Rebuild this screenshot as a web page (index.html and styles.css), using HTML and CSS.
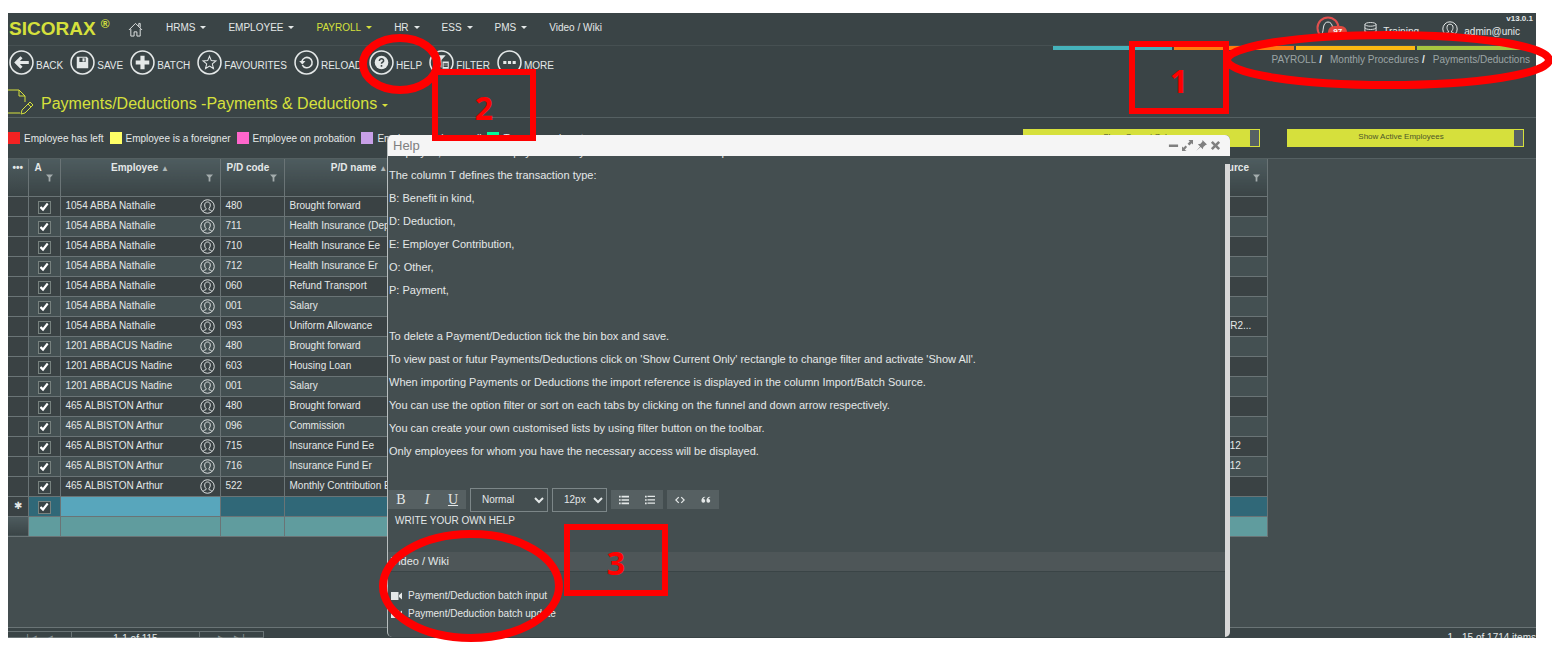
FILE: index.html
```
<!DOCTYPE html>
<html lang="en">
<head>
    <meta charset="UTF-8">
    <meta name="viewport" content="width=device-width, initial-scale=1.0">
    <title>Sicorax - Payments/Deductions</title>
    <link rel="stylesheet" href="styles.css">
</head>
<body>
    <svg class="symbols" aria-hidden="true">
        <symbol id="user" viewBox="0 0 16 16">
            <circle cx="8" cy="8" r="7.2"/>
            <path d="M3.2 13.2c.6-1.3 2.2-1.2 3.2-1.9V10C5.400 9.200 5 7.800 5 6.300c0-1.900 1.200-3.100 3-3.100s3 1.200 3 3.100c0 1.500-.4 2.900-1.400 3.700v1.300c1 .7 2.600.6 3.200 1.900"/>
        </symbol>
        <symbol id="funnel" viewBox="0 0 8 8"><path d="M0 0h8L5 3.500V8H3V3.500z"/></symbol>
        <symbol id="camera" viewBox="0 0 12 8"><path d="M0 0h7.500v8H0zM8 3l3-2.500v7L8 5z"/></symbol>
    </svg>

    <div class="app">
        <header class="topbar">
            <a class="logo" href="#">SICORAX <sup>®</sup></a>
            <a class="home" href="#" aria-label="Home">
                <svg viewBox="0 0 16 16"><path d="M1 8.500 8 1.500l7 7M3 7.500V15h3.500v-4.500h3V15H13V7.500M11.500 4.500v-3H13V6"/></svg>
            </a>
            <nav class="menu">
                <a href="#" class="caret">HRMS</a>
                <a href="#" class="caret">EMPLOYEE</a>
                <a href="#" class="caret active">PAYROLL</a>
                <a href="#" class="caret">HR</a>
                <a href="#" class="caret">ESS</a>
                <a href="#" class="caret">PMS</a>
                <a href="#">Video / Wiki</a>
            </nav>
            <div class="account">
                <span class="bell">
                    <svg viewBox="0 0 24 24"><circle cx="12" cy="12" r="10.500"/><path d="M6 18c1-2 1-4 1.500-7S9.500 6 12 6s4 2 4.500 5 .5 5 1.500 7z"/></svg>
                    <span class="badge">97</span>
                </span>
                <span class="database">
                    <svg viewBox="0 0 14 16"><ellipse cx="7" cy="3" rx="6" ry="2"/><path d="M1 3v10c0 2.700 12 2.700 12 0V3M1 6.500c0 2.700 12 2.700 12 0M1 10c0 2.700 12 2.700 12 0"/></svg>
                    Training
                </span>
                <span class="login"><svg><use href="#user"/></svg>admin@unic</span>
            </div>
            <span class="version">v13.0.1</span>
        </header>

        <div class="toolbar">
            <div class="actions">
                <button><svg viewBox="0 0 24 24"><circle cx="12" cy="12" r="11"/><path class="fill" d="M5 12l6-6 2 2-2.500 2.500H19v3h-8.500L13 16l-2 2z"/></svg><span>BACK</span></button>
                <button><svg viewBox="0 0 24 24"><circle cx="12" cy="12" r="11"/><path class="fill" fill-rule="evenodd" d="M6.500 6.500h9.500L17.500 8v9.500h-11zM9 7.500v4h6v-4zM12 8h2v3h-2z"/></svg><span>SAVE</span></button>
                <button><svg viewBox="0 0 24 24"><circle cx="12" cy="12" r="11"/><path class="fill" d="M10 5.500h4V10h4.500v4H14v4.500h-4V14H5.500v-4H10z"/></svg><span>BATCH</span></button>
                <button><svg viewBox="0 0 24 24"><circle cx="12" cy="12" r="11"/><path class="thin" d="M12 6l1.700 4.200 4.500.300-3.500 2.900 1.100 4.400L12 15.400l-3.800 2.400 1.100-4.400-3.500-2.900 4.500-.3z"/></svg><span>FAVOURITES</span></button>
                <button><svg viewBox="0 0 24 24"><circle cx="12" cy="12" r="11"/><path d="M8 14.500A5 5 0 1 0 7.500 11"/><path class="fill" d="M5 10.500h6L8 14z"/></svg><span>RELOAD</span></button>
                <button><svg viewBox="0 0 24 24"><circle cx="12" cy="12" r="11"/><circle class="fill" cx="12" cy="12" r="6.500"/><path class="mark" d="M10 10.500c0-3 4.200-2.700 4 0-.1 1.200-2 1.300-2 2.800M12 14.500v1.500"/></svg><span>HELP</span></button>
                <button><svg viewBox="0 0 24 24"><circle cx="12" cy="12" r="11"/><path class="fill" d="M5 5h11l-4 4.500V17l-3-2V9.500zM13 11h6v7h-6z"/><path class="mark" d="M14 13.500h4M14 15.500h4"/></svg><span>FILTER</span></button>
                <button><svg viewBox="0 0 24 24"><circle cx="12" cy="12" r="11"/><path class="fill" d="M6 10.500h3v3H6zM10.500 10.500h3v3h-3zM15 10.500h3v3h-3z"/></svg><span>MORE</span></button>
            </div>
            <div class="trail">
                <div class="stripes"><i class="cyan"></i><i class="orange"></i><i class="yellow"></i><i class="green"></i></div>
                <div class="breadcrumb">
                    <a href="#">PAYROLL</a><b>/</b><a href="#">Monthly Procedures</a><b>/</b><a href="#">Payments/Deductions</a>
                </div>
            </div>
        </div>

        <div class="page-title">
            <svg viewBox="0 0 26 28"><path d="M0 2h11l6 6v6M11 2v6h6M0 25h12M13 26l1-4 8-8 3 3-8 8zM20 16l3 3"/></svg>
            <h1 class="caret">Payments/Deductions -Payments &amp; Deductions</h1>
        </div>

        <div class="filters">
            <div class="legend">
                <span><i class="left"></i>Employee has left</span>
                <span><i class="foreigner"></i>Employee is a foreigner</span>
                <span><i class="probation"></i>Employee on probation</span>
                <span><i class="payroll"></i>Employee not in payroll</span>
                <span><i class="terminated"></i>Temporary absent</span>
            </div>
            <div class="toggles">
                <button class="toggle">Show Current Only</button>
                <button class="toggle">Show Active Employees</button>
            </div>
        </div>

        <main class="grid-area">
            <table class="grid">
                <colgroup><col class="c-row"><col class="c-check"><col class="c-employee"><col class="c-code"><col class="c-name"><col><col class="c-source"></colgroup>
                <thead>
                    <tr>
                        <th>•••</th>
                        <th class="first">A<svg><use href="#funnel"/></svg></th>
                        <th>Employee <small>▲</small><svg><use href="#funnel"/></svg></th>
                        <th class="first">P/D code<svg><use href="#funnel"/></svg></th>
                        <th>P/D name <small>▲</small><svg><use href="#funnel"/></svg></th>
                        <th></th>
                        <th class="source">Import/Batch Source<svg><use href="#funnel"/></svg></th>
                    </tr>
                </thead>
                <tbody id="rows"></tbody>
            </table>
        </main>

        <footer class="pager">
            <div class="pages"><span>|◀&nbsp;&nbsp; ◀</span><span>1-1 of 115</span><span>▶&nbsp;&nbsp; ▶|</span></div>
            <div class="total">1 - 15 of 1714 items</div>
        </footer>

        <section class="help">
            <div class="help-title">
                <h2>Help</h2>
                <button aria-label="Minimise"><svg viewBox="0 0 12 12"><path d="M1 5h10v2.500H1z"/></svg></button>
                <button aria-label="Maximise"><svg viewBox="0 0 12 12"><path d="M7 0h5v5l-1.500-1.500L8 6 6 4l2.500-2.500zM0 12V7l1.500 1.500L4 6l1.500 1.500L3 10.500 5 12z"/></svg></button>
                <button aria-label="Pin"><svg viewBox="0 0 12 12"><path d="M7 0l5 5-1.500.500L8 7.500 7.500 10 5 7.500 0 12l4.500-5L2 4.500 5 4l2-2.500z"/></svg></button>
                <button aria-label="Close"><svg viewBox="0 0 12 12"><path d="M3 1l3 3 3-3 2 2-3 3 3 3-2 2-3-3-3 3-2-2 3-3-3-3z"/></svg></button>
            </div>
            <div class="help-body">
                <div class="help-text">
                    <p>Employee, deductions or payments may be entered for one or more periods.</p>
                    <p>The column T defines the transaction type:</p>
                    <p>B: Benefit in kind,</p>
                    <p>D: Deduction,</p>
                    <p>E: Employer Contribution,</p>
                    <p>O: Other,</p>
                    <p>P: Payment,</p>
                    <p>&nbsp;</p>
                    <p>To delete a Payment/Deduction tick the bin box and save.</p>
                    <p>To view past or futur Payments/Deductions click on 'Show Current Only' rectangle to change filter and activate 'Show All'.</p>
                    <p>When importing Payments or Deductions the import reference is displayed in the column Import/Batch Source.</p>
                    <p>You can use the option filter or sort on each tabs by clicking on the funnel and down arrow respectively.</p>
                    <p>You can create your own customised lists by using filter button on the toolbar.</p>
                    <p>Only employees for whom you have the necessary access will be displayed.</p>
                </div>
                <div class="editor-bar">
                    <div class="group serif"><button>B</button><button><em>I</em></button><button><u>U</u></button></div>
                    <select class="style" aria-label="Style"><option>Normal</option></select>
                    <select class="size" aria-label="Size"><option>12px</option></select>
                    <div class="group">
                        <button aria-label="Numbered list"><svg viewBox="0 0 12 12"><path d="M0 1h2v2H0zM0 5h2v2H0zM0 9h2v2H0zM3 1h9v2H3zM3 5h9v2H3zM3 9h9v2H3z"/></svg></button>
                        <button aria-label="Bullet list"><svg viewBox="0 0 12 12"><path d="M0 1h2v2H0zM0 5h2v2H0zM0 9h2v2H0zM3 1h9v1.500H3zM3 5h9v1.500H3zM3 9h9v1.500H3z"/></svg></button>
                    </div>
                    <div class="group">
                        <button aria-label="Code"><svg viewBox="0 0 12 12"><path class="line" d="M4.500 2.500 1 6l3.500 3.500M7.500 2.500 11 6 7.500 9.500"/></svg></button>
                        <button aria-label="Quote"><svg viewBox="0 0 12 12"><path d="M5 2C2 2 .5 4 .5 7a2.300 2.300 0 1 0 2.500-2.300C3 3.500 4 3 5 3zM11 2C8 2 6.500 4 6.500 7A2.300 2.300 0 1 0 9 4.700C9 3.500 10 3 11 3z"/></svg></button>
                    </div>
                </div>
                <div class="own-help">WRITE YOUR OWN HELP</div>
                <h3>Video / Wiki</h3>
                <ul class="videos">
                    <li><a href="#"><svg><use href="#camera"/></svg>Payment/Deduction batch input</a></li>
                    <li><a href="#"><svg><use href="#camera"/></svg>Payment/Deduction batch update</a></li>
                </ul>
            </div>
            <div class="scrollbar"></div>
        </section>
    </div>

    <!-- Numbered steps drawn over the screen -->
    <svg class="steps" width="1552" height="650">
        <ellipse cx="400" cy="64" rx="37" ry="26"/>
        <rect x="435" y="72" width="98" height="66"/>
        <rect x="1132" y="44" width="94" height="67"/>
        <ellipse cx="1388" cy="60" rx="161" ry="25"/>
        <ellipse cx="471" cy="586" rx="88" ry="52"/>
        <rect x="567" y="527" width="98" height="66"/>
        <text x="1179" y="93">1</text>
        <text x="484" y="120">2</text>
        <text x="616" y="575">3</text>
    </svg>

    <script>
        const rows = [
            ['1054 ABBA Nathalie', '480', 'Brought forward', ''],
            ['1054 ABBA Nathalie', '711', 'Health Insurance (Dependents)', ''],
            ['1054 ABBA Nathalie', '710', 'Health Insurance Ee', ''],
            ['1054 ABBA Nathalie', '712', 'Health Insurance Er', ''],
            ['1054 ABBA Nathalie', '060', 'Refund Transport', ''],
            ['1054 ABBA Nathalie', '001', 'Salary', ''],
            ['1054 ABBA Nathalie', '093', 'Uniform Allowance', 'UNIF ALLOW FOR2...'],
            ['1201 ABBACUS Nadine', '480', 'Brought forward', ''],
            ['1201 ABBACUS Nadine', '603', 'Housing Loan', ''],
            ['1201 ABBACUS Nadine', '001', 'Salary', ''],
            ['465 ALBISTON Arthur', '480', 'Brought forward', ''],
            ['465 ALBISTON Arthur', '096', 'Commission', ''],
            ['465 ALBISTON Arthur', '715', 'Insurance Fund Ee', 'IMPORT 20211 412'],
            ['465 ALBISTON Arthur', '716', 'Insurance Fund Er', 'IMPORT 20211 412'],
            ['465 ALBISTON Arthur', '522', 'Monthly Contribution Ee', '']
        ];
        const check = '<input type="checkbox" checked aria-label="Active">';

        let html = '';
        rows.forEach(([employee, code, name, source]) => {
            html += `<tr>
                <td></td><td class="check">${check}</td>
                <td><div class="employee">${employee}<svg><use href="#user"/></svg></div></td>
                <td>${code}</td><td>${name}</td><td></td><td>${source}</td>
            </tr>`;
        });
        html += `<tr class="new-row"><td>✱</td><td class="check">${check}</td><td class="editing"></td><td></td><td></td><td></td><td></td></tr>`;
        html += '<tr class="sum-row"><td></td><td></td><td></td><td></td><td></td><td></td><td></td></tr>';
        document.getElementById('rows').innerHTML = html;
    </script>
</body>
</html>
```
FILE: styles.css
```
* {
    box-sizing: border-box;
}
body {
    margin: 0;
    padding: 13px 16px 12px 8px;
    background-color: #fff;
    font-family: "Liberation Sans", Arial, sans-serif;
    font-size: 10px;
    color: #e4e8e8;
    overflow: hidden;
}
a {
    color: inherit;
    text-decoration: none;
}
button {
    border: 0;
    padding: 0;
    background: none;
    color: inherit;
    font: inherit;
    cursor: pointer;
}
h1, h2, h3, p, ul {
    margin: 0;
    padding: 0;
    font-weight: normal;
}
svg {
    fill: none;
    stroke: currentColor;
    flex: none;
}
.symbols {
    position: absolute;
    width: 0;
    height: 0;
}
.app {
    position: relative;
    display: flex;
    flex-direction: column;
    height: calc(100vh - 25px);
    background-color: #3a4446;
    overflow: hidden;
}

/* Top bar */
.topbar {
    position: relative;
    display: flex;
    align-items: center;
    height: 33px;
    flex: none;
    border-bottom: 1px solid #465052;
}
.logo {
    width: 120px;
    padding-left: 1px;
    font-size: 19px;
    font-weight: bold;
    color: #d6e03c;
}
.logo sup {
    font-size: 12px;
    line-height: 1px;
}
.home svg {
    display: block;
    width: 15px;
    height: 15px;
}
.menu {
    display: flex;
    gap: 22px;
    padding: 0 0 4px 23px;
}
.menu .active {
    color: #d6e03c;
}
.caret::after {
    content: "";
    display: inline-block;
    margin-left: 5px;
    vertical-align: 2px;
    border: 3px solid transparent;
    border-top-color: currentColor;
    border-bottom: 0;
}
.account {
    display: flex;
    align-items: center;
    margin-left: auto;
    padding-right: 16px;
}
.bell {
    position: relative;
    width: 48px;
    height: 26px;
}
.bell svg {
    width: 24px;
    height: 24px;
}
.bell circle {
    stroke: #e0504e;
    stroke-width: 2;
}
.badge {
    position: absolute;
    left: 12px;
    top: 10px;
    width: 19px;
    height: 13px;
    border-radius: 6px;
    background-color: #e0483e;
    color: #fff;
    font-size: 8px;
    font-weight: bold;
    line-height: 12px;
    text-align: center;
}
.database, .login {
    display: flex;
    align-items: flex-end;
    gap: 6px;
}
.database {
    width: 78px;
}
.database svg {
    width: 13px;
    height: 16px;
}
.login svg {
    width: 16px;
    height: 16px;
}
.version {
    position: absolute;
    right: 3px;
    top: 1px;
    font-size: 8px;
    font-weight: bold;
}

/* Toolbar */
.toolbar {
    display: flex;
    justify-content: space-between;
    height: 41px;
    flex: none;
}
.actions {
    display: flex;
    align-items: flex-start;
    gap: 7px;
    padding: 4px 0 0 1px;
}
.actions button {
    display: flex;
    align-items: center;
    gap: 2px;
}
.actions svg {
    width: 25px;
    height: 25px;
    stroke-width: 1.5;
}
.actions span {
    padding-top: 5px;
}
.fill {
    fill: currentColor;
    stroke: none;
}
.thin {
    stroke-width: 1;
}
.mark {
    stroke: #3a4446;
}
.trail {
    width: 483px;
}
.stripes {
    display: flex;
    gap: 2px;
    height: 4px;
}
.stripes i {
    flex: 1;
}
.cyan {
    background-color: #45b2bb;
}
.orange {
    background-color: #ff7a0e;
}
.yellow {
    background-color: #fbb813;
}
.green {
    background-color: #a6c640;
}
.breadcrumb {
    display: flex;
    justify-content: flex-end;
    padding: 4px 6px 0 0;
    color: #9ca4a5;
    line-height: 12px;
}
.breadcrumb b {
    margin: 0 8px 0 3px;
    color: #e4e8e8;
}

/* Page title */
.page-title {
    display: flex;
    align-items: center;
    gap: 7px;
    height: 31px;
    flex: none;
    border-bottom: 1px solid #556062;
    color: #d6e03c;
}
.page-title svg {
    width: 26px;
    height: 28px;
}
.page-title h1 {
    padding-top: 3px;
    font-size: 16px;
}

/* Legend and toggles */
.filters {
    display: flex;
    justify-content: space-between;
    align-items: center;
    height: 40px;
    flex: none;
    padding-right: 12px;
}
.legend {
    display: flex;
    gap: 6px;
}
.legend span {
    display: flex;
    align-items: center;
    gap: 4px;
}
.legend i {
    width: 12px;
    height: 12px;
}
.left {
    background-color: #f42222;
}
.foreigner {
    background-color: #ffff66;
}
.probation {
    background-color: #ff66cc;
}
.payroll {
    background-color: #c8a0e8;
}
.terminated {
    background-color: #00fa9a;
}
.toggles {
    display: flex;
    gap: 27px;
}
.toggle {
    width: 237px;
    height: 18px;
    padding: 0 9px 4px 0;
    border: 1px solid #d6e03c;
    background: linear-gradient(to left, #566064 9px, #d6e03c 9px);
    color: #4c562a;
    font-size: 8px;
}

/* Grid */
.grid-area {
    flex: 1;
    min-height: 0;
    border-top: 1px solid #556062;
    border-bottom: 1px solid #6a7476;
    background-color: #444e50;
    overflow: hidden;
}
.grid {
    width: 1260px;
    table-layout: fixed;
    border-collapse: collapse;
}
.c-row {
    width: 20px;
}
.c-check {
    width: 32px;
}
.c-employee {
    width: 160px;
}
.c-code {
    width: 64px;
}
.c-name {
    width: 150px;
}
.c-source {
    width: 120px;
}
.grid th {
    position: relative;
    height: 37px;
    padding: 3px 0 0;
    border-right: 1px solid #6a7476;
    background: linear-gradient(#4e5c5f, #3a4446);
    line-height: 12px;
    vertical-align: top;
    white-space: nowrap;
}
.grid th.first {
    padding-left: 6px;
    text-align: left;
}
.grid th.source {
    padding-right: 18px;
    text-align: right;
}
.grid th small {
    font-size: 8px;
    color: #b0b8b9;
}
.grid th svg {
    position: absolute;
    right: 7px;
    top: 15px;
    width: 7px;
    height: 8px;
    fill: #a4acad;
    stroke: none;
}
.grid td {
    height: 20px;
    padding: 0 5px;
    border: 1px solid #6a7476;
    border-left: 0;
    line-height: 12px;
    white-space: nowrap;
    overflow: hidden;
}
.grid tbody tr {
    background-color: #3a4244;
}
.grid tbody tr:nth-child(even) {
    background-color: #445052;
}
.grid tbody td:first-child {
    padding: 0;
    background-color: #3a4244;
    text-align: center;
}
.grid .check {
    padding: 2px 0 0;
    text-align: center;
}
.check input {
    appearance: none;
    display: block;
    width: 13px;
    height: 13px;
    margin: 0 auto;
    border: 1px solid #78827f;
    background-color: #3a4446;
}
.check input:checked::before {
    content: "";
    display: block;
    width: 9px;
    height: 9px;
    margin: 1px;
    background-color: #fff;
    clip-path: polygon(0 58%, 20% 42%, 38% 58%, 82% 4%, 100% 20%, 40% 96%);
}
.employee {
    display: flex;
    align-items: center;
    justify-content: space-between;
}
.employee svg {
    width: 15px;
    height: 15px;
}
.grid tbody tr.new-row {
    background-color: #306878;
}
.new-row .editing {
    background-color: #58a6bc;
}
.grid tbody tr.sum-row {
    background-color: #609c9e;
}
.grid .sum-row td:first-child {
    background: linear-gradient(#4e5c5f, #3a4446);
}

/* Pager */
.pager {
    display: flex;
    justify-content: space-between;
    height: 10px;
    flex: none;
    padding-top: 3px;
}
.pages {
    display: flex;
    width: 256px;
    border: 1px solid #6a7476;
    border-left: 0;
    text-align: center;
    line-height: 14px;
}
.pages span {
    flex: 1;
    color: #8a9495;
}
.pages span:nth-child(2) {
    flex: 2;
    border: solid #6a7476;
    border-width: 0 1px;
    color: #e4e8e8;
}
.total {
    line-height: 13px;
}

/* Help window */
.help {
    position: absolute;
    left: 379px;
    right: 306px;
    top: 122px;
    bottom: 1px;
    border-left: 1px solid #b8bebf;
    border-radius: 5px;
    background-color: #444e50;
    overflow: hidden;
}
.help-title {
    position: relative;
    display: flex;
    align-items: center;
    gap: 2px;
    height: 21px;
    padding: 0 8px 0 5px;
    background-color: #f5f5f5;
    color: #808080;
}
.help-title h2 {
    flex: 1;
    font-size: 13px;
}
.help-title button {
    width: 12px;
    height: 12px;
}
.help-title svg {
    display: block;
    width: 11px;
    height: 11px;
    fill: currentColor;
    stroke: none;
}
.help-body {
    height: 479px;
    overflow: hidden;
}
.help-text {
    margin-top: -11px;
    padding-left: 1px;
    font-size: 11px;
    line-height: 15px;
}
.help-text p {
    margin-bottom: 8px;
}
.editor-bar {
    display: flex;
    align-items: center;
    gap: 4px;
    height: 25px;
    margin-top: 28px;
}
.group {
    display: flex;
    height: 19px;
    background-color: #566062;
}
.group button {
    width: 26px;
}
.group svg {
    display: block;
    width: 10px;
    height: 10px;
    margin: 0 auto;
    fill: currentColor;
    stroke: none;
}
.group .line {
    fill: none;
    stroke: currentColor;
    stroke-width: 1.5;
}
.serif {
    font-family: "Liberation Serif", serif;
    font-size: 14px;
}
.editor-bar select {
    height: 24px;
    border: 1px solid #7c8688;
    background-color: #444e50;
    color: inherit;
    font: inherit;
}
.editor-bar .style {
    width: 78px;
    padding-left: 7px;
}
.editor-bar .size {
    width: 55px;
    padding-left: 7px;
}
.own-help {
    height: 40px;
    padding-left: 7px;
    line-height: 17px;
}
.help h3 {
    height: 20px;
    padding-left: 3px;
    border-bottom: 1px solid #3a4446;
    background-color: #4e5658;
    font-size: 11px;
    line-height: 19px;
}
.videos {
    margin-top: 15px;
    list-style: none;
    line-height: 18px;
}
.videos a {
    display: flex;
    align-items: center;
    gap: 5px;
    padding-left: 3px;
}
.videos svg {
    width: 12px;
    height: 8px;
    fill: currentColor;
    stroke: none;
}
.scrollbar {
    position: absolute;
    right: 0;
    top: 29px;
    bottom: 0;
    width: 5px;
    background-color: #d8d8d8;
}

/* Steps */
.steps {
    position: absolute;
    left: 0;
    top: 0;
    stroke: #f00;
    stroke-width: 8;
    pointer-events: none;
}
.steps rect {
    stroke-width: 6;
}
.steps text {
    fill: #f00;
    stroke: none;
    font-family: "Open Sans", sans-serif;
    font-size: 32px;
    font-weight: bold;
    text-anchor: middle;
}
```
